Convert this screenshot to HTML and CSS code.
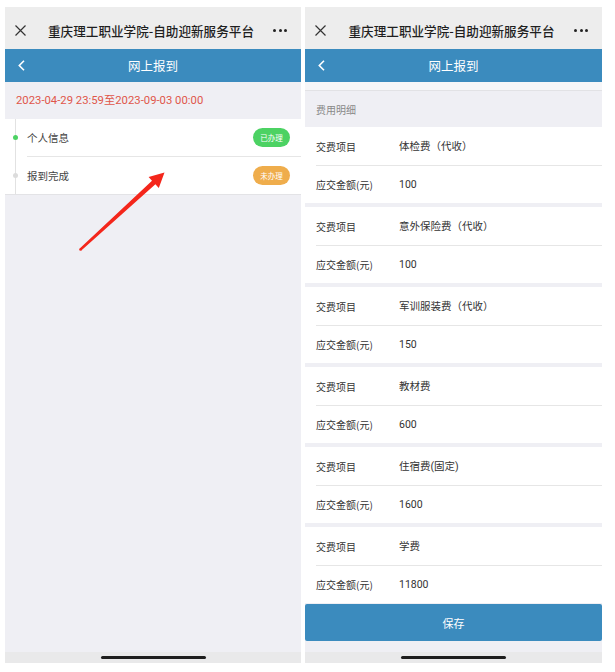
FILE: index.html
```html
<!DOCTYPE html>
<html lang="zh-CN">
<head>
    <meta charset="UTF-8">
    <meta name="viewport" content="width=device-width, initial-scale=1.0">
    <title>网上报到</title>
    <link rel="stylesheet" href="styles.css">
</head>
<body>

    <div class="screens">

        <!-- Screen 1: steps -->
        <div class="phone phone-left">
            <div class="wx-bar">
                <svg class="wx-close" width="11" height="11" viewBox="0 0 11 11"><path d="M0.5 0.5L10.5 10.5M10.5 0.5L0.5 10.5" stroke="#333" stroke-width="1.2" fill="none"/></svg>
                <span class="wx-title">重庆理工职业学院-自助迎新服务平台</span>
                <span class="wx-more"><i></i><i></i><i></i></span>
            </div>
            <div class="nav-bar">
                <svg class="nav-back" width="7" height="11" viewBox="0 0 7 11"><path d="M6 0.8L1.3 5.5L6 10.2" stroke="#fff" stroke-width="1.6" fill="none"/></svg>
                <span class="nav-title">网上报到</span>
            </div>
            <div class="page">
                <p class="period">2023-04-29 23:59至2023-09-03 00:00</p>
                <div class="steps">
                    <ul class="step-list">
                        <li class="step">
                            <span class="dot dot-done"></span>
                            <span class="step-name">个人信息</span>
                            <span class="badge badge-done">已办理</span>
                        </li>
                        <li class="step">
                            <span class="dot"></span>
                            <span class="step-name">报到完成</span>
                            <span class="badge badge-todo">未办理</span>
                        </li>
                    </ul>
                </div>
            </div>
            <div class="home-strip"><span class="home-bar"></span></div>
        </div>

        <!-- Screen 2: fees -->
        <div class="phone phone-right">
            <div class="wx-bar">
                <svg class="wx-close" width="11" height="11" viewBox="0 0 11 11"><path d="M0.5 0.5L10.5 10.5M10.5 0.5L0.5 10.5" stroke="#333" stroke-width="1.2" fill="none"/></svg>
                <span class="wx-title">重庆理工职业学院-自助迎新服务平台</span>
                <span class="wx-more"><i></i><i></i><i></i></span>
            </div>
            <div class="nav-bar">
                <svg class="nav-back" width="7" height="11" viewBox="0 0 7 11"><path d="M6 0.8L1.3 5.5L6 10.2" stroke="#fff" stroke-width="1.6" fill="none"/></svg>
                <span class="nav-title">网上报到</span>
            </div>
            <div class="page">
                <div class="top-gap"></div>
                <p class="section-label">费用明细</p>
                <div class="fee-list" id="feeList"></div>
                <button class="save-button">保存</button>
            </div>
            <div class="home-strip"><span class="home-bar"></span></div>
        </div>

    </div>

    <!-- annotation arrow -->
    <svg class="arrow" width="615" height="672" viewBox="0 0 615 672">
        <polygon points="79.7,248.6 152.0,180.7 148.6,177.0 164.5,172.5 158.8,188.0 155.4,184.3 81.3,250.4" fill="#f4261b"/>
        <circle cx="80.5" cy="249.5" r="1.3" fill="#f4261b"/>
    </svg>

    <script>
        // Fee data
        const fees = [
            { name: "体检费（代收）", amount: 100 },
            { name: "意外保险费（代收）", amount: 100 },
            { name: "军训服装费（代收）", amount: 150 },
            { name: "教材费", amount: 600 },
            { name: "住宿费(固定)", amount: 1600 },
            { name: "学费", amount: 11800 }
        ];

        const feeList = document.getElementById('feeList');
        fees.forEach(fee => {
            const card = document.createElement('div');
            card.classList.add('fee-card');
            card.innerHTML = `
                <div class="fee-row"><span class="fee-label">交费项目</span><span class="fee-value">${fee.name}</span></div>
                <div class="fee-row"><span class="fee-label">应交金额(元)</span><span class="fee-value">${fee.amount}</span></div>
            `;
            feeList.appendChild(card);
        });
    </script>

</body>
</html>
```

FILE: styles.css
```css
/* Basic Reset */
* {
    margin: 0;
    padding: 0;
    box-sizing: border-box;
}

body {
    font-family: "Noto Sans CJK SC", sans-serif;
    background-color: #fff;
    color: #333;
    width: 615px;
    height: 672px;
    position: relative;
    overflow: hidden;
}

/* Two screens side by side */
.screens {
    display: flex;
    gap: 4px;
    padding: 7px 0 0 5px;
}

.phone {
    display: flex;
    flex-direction: column;
    height: 656px;
    background-color: #efeff4;
}

.phone-left {
    width: 296px;
}

.phone-right {
    width: 297px;
}

/* WeChat title bar */
.wx-bar {
    height: 42px;
    background-color: #ededed;
    display: flex;
    align-items: center;
    padding: 5px 14px 0 10px;
}

.wx-close {
    flex-shrink: 0;
}

.wx-title {
    flex: 1;
    text-align: center;
    font-size: 12.6px;
    line-height: 18px;
    font-weight: 500;
    color: #1f1f1f;
    white-space: nowrap;
    padding-left: 3px;
}

.wx-more {
    display: flex;
    gap: 2.5px;
}

.wx-more i {
    width: 3px;
    height: 3px;
    border-radius: 50%;
    background-color: #222;
}

/* Blue nav bar */
.nav-bar {
    height: 33px;
    background-color: #3b8bbe;
    display: flex;
    align-items: center;
    padding-left: 13px;
}

.nav-title {
    flex: 1;
    text-align: center;
    color: #fff;
    font-size: 12.5px;
    line-height: 18px;
    margin-right: 20px;
}

.page {
    flex: 1;
    display: flex;
    flex-direction: column;
}

/* Left screen */
.period {
    height: 37px;
    line-height: 37px;
    padding-left: 11px;
    font-family: Roboto, "Noto Sans CJK SC", sans-serif;
    font-size: 11.3px;
    color: #e0564a;
}

.steps {
    background-color: #fff;
    padding-left: 10px;
    border-bottom: 1px solid #e3e3e6;
}

.step-list {
    list-style: none;
    border-left: 1px solid #e2e2e2;
}

.step {
    display: flex;
    align-items: center;
    height: 37px;
    margin-left: 11px;
    padding-right: 11px;
}

.step:first-child {
    height: 38px;
    border-bottom: 1px solid #e6e6e6;
}

.dot {
    width: 5px;
    height: 5px;
    border-radius: 50%;
    background-color: #dcdcdc;
    margin: 0 9px 0 -14px;
}

.dot-done {
    background-color: #4cd263;
}

.step-name {
    flex: 1;
    font-size: 10.5px;
    line-height: 14px;
    color: #444;
}

.badge {
    width: 37px;
    height: 19px;
    border-radius: 10px;
    color: #fff;
    font-size: 7.5px;
    line-height: 19px;
    text-align: center;
}

.badge-done {
    background-color: #4cd263;
}

.badge-todo {
    background-color: #efad4c;
}

/* Right screen */
.top-gap {
    height: 9px;
    background-color: #f6f6f8;
    border-bottom: 1px solid #e2e2e5;
}

.section-label {
    height: 36px;
    line-height: 37px;
    padding-left: 11px;
    font-size: 10px;
    color: #888;
}

.fee-card {
    background-color: #fff;
    margin-bottom: 4px;
}

.fee-card:last-child {
    margin-bottom: 0;
}

.fee-row {
    display: flex;
    align-items: center;
    height: 37px;
    margin-left: 11px;
    padding-top: 1px;
    font-size: 10px;
    line-height: 14px;
    color: #333;
}

.fee-row:first-child {
    height: 39px;
    padding-top: 2px;
    border-bottom: 1px solid #e6e6e6;
}

.fee-label {
    width: 83px;
}

.fee-value {
    font-family: Roboto, "Noto Sans CJK SC", sans-serif;
    font-size: 10.5px;
}

.save-button {
    margin-top: 1px;
    height: 37px;
    border: none;
    border-radius: 2px;
    background-color: #3b8bbe;
    color: #fff;
    font-family: "Noto Sans CJK SC", sans-serif;
    font-size: 11px;
}

/* Home indicator */
.home-strip {
    height: 11px;
    background-color: #e9e9ea;
    display: flex;
    justify-content: center;
    align-items: center;
}

.home-bar {
    width: 105px;
    height: 3px;
    border-radius: 2px;
    background-color: #1e1e1e;
}

/* Annotation arrow */
.arrow {
    position: absolute;
    top: 0;
    left: 0;
    pointer-events: none;
}
```
